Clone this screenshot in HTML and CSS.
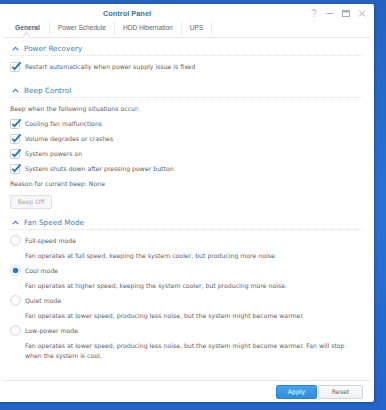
FILE: index.html
```html
<!DOCTYPE html>
<html>
<head>
<meta charset="utf-8">
<link rel="stylesheet" href="styles.css">
</head>
<body>
<div class="win">
  <div class="titlebar">
    <span class="title">Control Panel</span>
    <div class="ctrls">
      <svg width="8" height="9" viewBox="0 0 8 9"><path d="M1.5 2.2 Q2 0.8 4 0.8 Q6 0.8 6 2.5 Q6 3.6 4.5 4.3 Q4 4.6 4 5.6" fill="none" stroke="#a9b0b8" stroke-width="1"/><rect x="3.5" y="7" width="1" height="1" fill="#a9b0b8"/></svg>
      <svg width="8" height="9" viewBox="0 0 8 9"><rect x="0.5" y="4" width="7" height="1" fill="#a9b0b8"/></svg>
      <svg width="8" height="9" viewBox="0 0 8 9"><rect x="0.5" y="1.5" width="7" height="6" fill="none" stroke="#a9b0b8" stroke-width="1"/><rect x="0.5" y="1.5" width="7" height="2" fill="#a9b0b8"/></svg>
      <svg width="8" height="9" viewBox="0 0 8 9"><path d="M1 1.5 L7 7.5 M7 1.5 L1 7.5" stroke="#a9b0b8" stroke-width="1"/></svg>
    </div>
  </div>
  <div class="tabs">
    <div class="tab active">General</div>
    <div class="tab">Power Schedule</div>
    <div class="tab">HDD Hibernation</div>
    <div class="tab">UPS</div>
  </div>
  <div class="content">
    <div class="hdr first"><svg class="chev" width="7" height="5" viewBox="0 0 7 5"><path d="M0.8 4.2 L3.5 1.3 L6.2 4.2" fill="none" stroke="#3d7fb6" stroke-width="1.1"/></svg>Power Recovery</div>
    <div class="row"><span class="cb"><svg width="12" height="11" viewBox="0 0 12 11"><rect x="0.5" y="1.5" width="9" height="9" rx="1" fill="#fff" stroke="#c9ced3"/><path d="M2.3 5.8 L4.6 8.2 L10.6 1.4" fill="none" stroke="#2b79c2" stroke-width="1.9"/></svg></span>Restart automatically when power supply issue is fixed</div>

    <div class="hdr"><svg class="chev" width="7" height="5" viewBox="0 0 7 5"><path d="M0.8 4.2 L3.5 1.3 L6.2 4.2" fill="none" stroke="#3d7fb6" stroke-width="1.1"/></svg>Beep Control</div>
    <div class="row plain">Beep when the following situations occur:</div>
    <div class="row"><span class="cb"><svg width="12" height="11" viewBox="0 0 12 11"><rect x="0.5" y="1.5" width="9" height="9" rx="1" fill="#fff" stroke="#c9ced3"/><path d="M2.3 5.8 L4.6 8.2 L10.6 1.4" fill="none" stroke="#2b79c2" stroke-width="1.9"/></svg></span>Cooling fan malfunctions</div>
    <div class="row"><span class="cb"><svg width="12" height="11" viewBox="0 0 12 11"><rect x="0.5" y="1.5" width="9" height="9" rx="1" fill="#fff" stroke="#c9ced3"/><path d="M2.3 5.8 L4.6 8.2 L10.6 1.4" fill="none" stroke="#2b79c2" stroke-width="1.9"/></svg></span>Volume degrades or crashes</div>
    <div class="row"><span class="cb"><svg width="12" height="11" viewBox="0 0 12 11"><rect x="0.5" y="1.5" width="9" height="9" rx="1" fill="#fff" stroke="#c9ced3"/><path d="M2.3 5.8 L4.6 8.2 L10.6 1.4" fill="none" stroke="#2b79c2" stroke-width="1.9"/></svg></span>System powers on</div>
    <div class="row"><span class="cb"><svg width="12" height="11" viewBox="0 0 12 11"><rect x="0.5" y="1.5" width="9" height="9" rx="1" fill="#fff" stroke="#c9ced3"/><path d="M2.3 5.8 L4.6 8.2 L10.6 1.4" fill="none" stroke="#2b79c2" stroke-width="1.9"/></svg></span>System shuts down after pressing power button</div>
    <div class="row plain">Reason for current beep: None</div>
    <div class="btnrow"><span class="btn disabled">Beep Off</span></div>

    <div class="hdr"><svg class="chev" width="7" height="5" viewBox="0 0 7 5"><path d="M0.8 4.2 L3.5 1.3 L6.2 4.2" fill="none" stroke="#3d7fb6" stroke-width="1.1"/></svg>Fan Speed Mode</div>
    <div class="row"><span class="rd"><svg width="11" height="11" viewBox="0 0 11 11"><circle cx="5.5" cy="5.5" r="4.8" fill="#fff" stroke="#d0d4d8"/></svg></span>Full-speed mode</div>
    <div class="desc">Fan operates at full speed, keeping the system cooler, but producing more noise.</div>
    <div class="row"><span class="rd"><svg width="11" height="11" viewBox="0 0 11 11"><circle cx="5.5" cy="5.5" r="4.8" fill="#fff" stroke="#d0d4d8"/><circle cx="5.5" cy="5.5" r="2.8" fill="#2a78c0"/></svg></span>Cool mode</div>
    <div class="desc">Fan operates at higher speed, keeping the system cooler, but producing more noise.</div>
    <div class="row"><span class="rd"><svg width="11" height="11" viewBox="0 0 11 11"><circle cx="5.5" cy="5.5" r="4.8" fill="#fff" stroke="#d0d4d8"/></svg></span>Quiet mode</div>
    <div class="desc">Fan operates at lower speed, producing less noise, but the system might become warmer.</div>
    <div class="row"><span class="rd"><svg width="11" height="11" viewBox="0 0 11 11"><circle cx="5.5" cy="5.5" r="4.8" fill="#fff" stroke="#d0d4d8"/></svg></span>Low-power mode</div>
    <div class="desc">Fan operates at lower speed, producing less noise, but the system might become warmer. Fan will stop when the system is cool.</div>
  </div>
  <div class="footer">
    <span class="btn primary">Apply</span>
    <span class="btn">Reset</span>
  </div>
</div>
</body>
</html>
```

FILE: styles.css
```css
html, body {
  margin: 0;
  padding: 0;
}
body {
  width: 386px;
  height: 410px;
  overflow: hidden;
  background: linear-gradient(180deg, #2462bf 0%, #2a72d2 50%, #2463c9 100%);
  padding-top: 4px;
  box-sizing: border-box;
  font-family: "DejaVu Sans", Verdana, sans-serif;
  font-size: 6.2px;
  color: #5a5f64;
}
.win {
  width: 374px;
  height: 398px;
  background: #fff;
  display: flex;
  flex-direction: column;
  box-shadow: 1px 1px 3px rgba(0, 0, 0, 0.25);
  border-radius: 0 2px 2px 0;
}
.titlebar {
  height: 18px;
  display: flex;
  align-items: center;
  position: relative;
}
.title {
  margin-left: 103px;
  font-family: "Liberation Sans", Arial, sans-serif;
  font-weight: bold;
  font-size: 7.4px;
  color: #3573a3;
}
.ctrls {
  margin-left: auto;
  margin-right: 8px;
  display: flex;
  gap: 8px;
  align-items: center;
}
.ctrls svg {
  display: block;
}
.tabs {
  display: flex;
  margin: 0 4px;
  height: 15px;
  border-bottom: 1px solid #e2e5e8;
}
.tab {
  padding: 0 8px;
  height: 13px;
  line-height: 12px;
  border-right: 1px solid #e8eaec;
  color: #60666c;
  font-family: "Liberation Sans", Arial, sans-serif;
  font-size: 6.6px;
  position: relative;
}
.tab.active {
  font-weight: bold;
  font-size: 6.7px;
  color: #3a6c96;
  padding: 0 9px 0 11px;
}
.tab.active::after {
  content: "";
  position: absolute;
  left: 50%;
  bottom: -3px;
  width: 4px;
  height: 4px;
  margin-left: -2px;
  border-left: 1px solid #d4d8dc;
  border-top: 1px solid #d4d8dc;
  background: #fff;
  transform: rotate(45deg);
}
.content {
  flex: 1;
  padding: 4px 10px 0 10px;
}
.hdr {
  height: 13px;
  line-height: 13px;
  border-bottom: 1px dotted #dde1e5;
  color: #3d7fb6;
  font-size: 7.3px;
  display: flex;
  align-items: center;
  margin-top: 10px;
  margin-bottom: 3px;
  margin-right: 2px;
}
.hdr.first {
  margin-top: 0;
}
.chev {
  margin-left: 2px;
  margin-right: 5px;
}
.row {
  height: 15px;
  display: flex;
  align-items: center;
}
.cb, .rd {
  width: 15px;
  display: flex;
  align-items: center;
}
.cb svg {
  margin-top: -1px;
}
.desc {
  padding: 3px 8px 2px 15px;
  line-height: 10px;
  color: #5d6267;
}
.btnrow {
  margin-top: 4px;
  margin-bottom: -3px;
  display: flex;
}
.btn {
  display: inline-block;
  height: 12px;
  line-height: 12px;
  border: 1px solid #cfd4d8;
  border-radius: 2px;
  background: linear-gradient(#fbfcfc, #eef0f2);
  color: #666;
  text-align: center;
  font-size: 6.2px;
}
.btn.disabled {
  width: 40px;
  color: #a9aeb3;
  border-color: #dde1e4;
  background: #f6f7f8;
}
.footer {
  height: 22px;
  margin: 0 4px;
  border-top: 1px solid #e4e7ea;
  display: flex;
  justify-content: flex-end;
  align-items: flex-start;
  padding-top: 4px;
  padding-right: 7px;
  box-sizing: border-box;
}
.footer .btn {
  width: 43px;
}
.btn.primary {
  width: 39px;
  background: linear-gradient(#45a3ec, #2f8ddc);
  border-color: #2a84d2;
  color: #fff;
  margin-right: 1px;
}
```
